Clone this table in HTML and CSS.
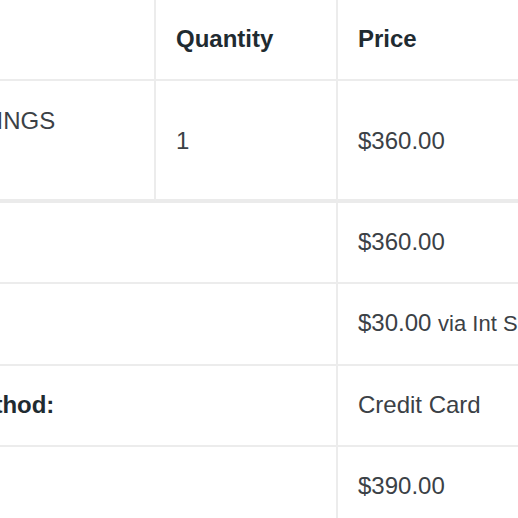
FILE: index.html
```html
<!DOCTYPE html>
<html lang="en">
<head>
<meta charset="utf-8">
<title>Order details</title>
<link rel="stylesheet" href="styles.css">
</head>
<body>
<div class="order-view">
  <table class="order-table">
    <colgroup>
      <col class="col-product">
      <col class="col-qty">
      <col class="col-price">
    </colgroup>
    <thead>
      <tr>
        <th>Product</th>
        <th>Quantity</th>
        <th>Price</th>
      </tr>
    </thead>
    <tbody>
      <tr class="item-row">
        <td class="product-name">HOOP EARRINGS<br><span class="meta">Colour: Gold, 18K –</span></td>
        <td>1</td>
        <td>$360.00</td>
      </tr>
    </tbody>
    <tfoot>
      <tr class="first">
        <th colspan="2">Subtotal:</th>
        <td>$360.00</td>
      </tr>
      <tr>
        <th colspan="2">Shipping:</th>
        <td>$30.00 <small class="via">via Int Shipping</small></td>
      </tr>
      <tr>
        <th colspan="2">Payment method:</th>
        <td>Credit Card</td>
      </tr>
      <tr>
        <th colspan="2">Total:</th>
        <td>$390.00</td>
      </tr>
    </tfoot>
  </table>
</div>
</body>
</html>
```

FILE: styles.css
```css
html, body {
  margin: 0;
  padding: 0;
  background: #ffffff;
  overflow: hidden;
}

.order-view {
  width: 518px;
  height: 518px;
  overflow: hidden;
}

.order-table {
  margin-left: -167px;
  width: 900px;
  table-layout: fixed;
  border-collapse: separate;
  border-spacing: 0;
  font-family: "Liberation Sans", Arial, Helvetica, sans-serif;
  font-size: 24px;
  line-height: 36px;
  color: #3b4146;
}

.col-product { width: 323px; }
.col-qty { width: 182px; }
.col-price { width: 395px; }

.order-table th,
.order-table td {
  box-sizing: border-box;
  padding: 21px 20px 22px;
  text-align: left;
  vertical-align: middle;
  border-right: 2px solid #ececec;
  border-bottom: 2px solid #ececec;
  white-space: nowrap;
}

.order-table th {
  font-weight: bold;
  color: #1f2b31;
}

.item-row td {
  padding-top: 22px;
  padding-bottom: 21px;
  border-bottom-width: 4px;
  border-bottom-color: #ebebeb;
}

.meta {
  color: #d9d9d9;
  font-size: 16px;
}

.via {
  font-size: 22px;
  color: #3b4146;
}
```
